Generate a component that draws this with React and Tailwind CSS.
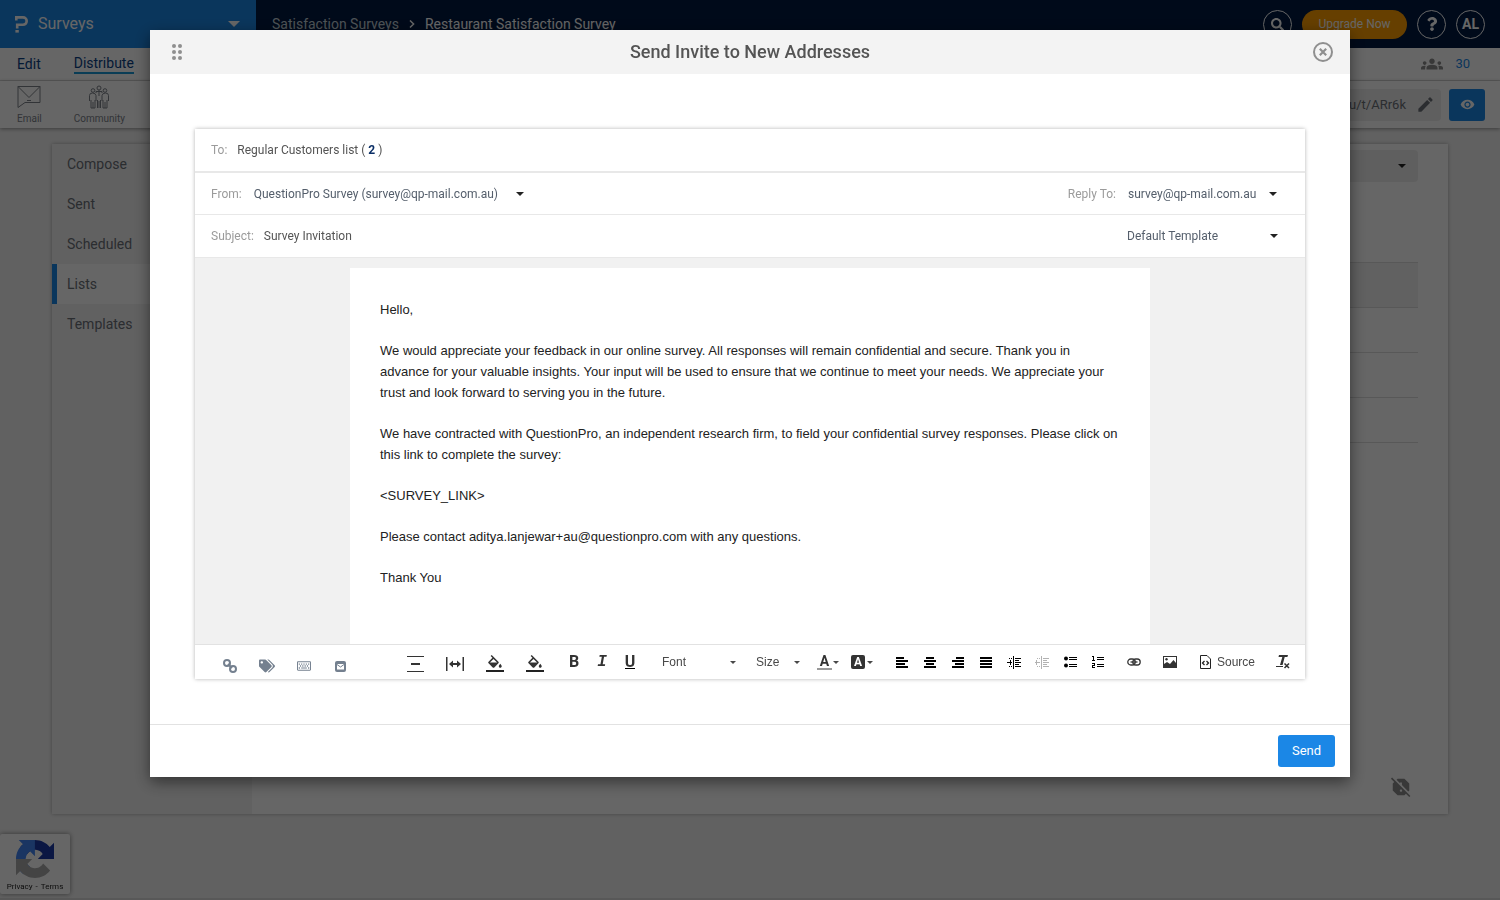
import React from 'react';
import { FaSearch, FaQuestion, FaTags, FaRegKeyboard } from 'react-icons/fa';
import { MdGroups, MdEdit, MdRemoveRedEye, MdReportOff, MdFormatColorFill } from 'react-icons/md';

const sideItems = ['Compose', 'Sent', 'Scheduled', 'Lists', 'Templates'];

export default function App() {
  return (
    <div className="min-h-screen flex flex-col bg-[#f3f3f3] border-b-2 border-[#dcdcdc] font-['Roboto',sans-serif]">
      <TopBar />
      <NavBar />
      <ToolRow />

      <main className="flex-1 flex px-[52px] pt-4 pb-[84px]">
        <div className="flex-1 flex bg-white shadow-[0_0_4px_rgba(0,0,0,0.3)]">
          <aside className="w-[200px] bg-[#f3f3f3]">
            {sideItems.map((item) => (
              <a
                key={item}
                href="#"
                className={`flex items-center h-10 text-sm text-[#6b7078] border-l-5 pl-[10px] ${
                  item === 'Lists' ? 'border-[#1b87e6] bg-white' : 'border-transparent'
                }`}
              >
                {item}
              </a>
            ))}
          </aside>

          <section className="flex-1 flex flex-col px-[30px] pt-[6px]">
            <div className="self-end relative w-[200px]">
              <select aria-label="List" className="appearance-none w-full h-8 rounded bg-[#eee]" />
              <Caret className="absolute right-3 top-[14px]" />
            </div>
            <table className="w-full mt-20">
              <thead>
                <tr className="h-[45px] bg-[#f3f3f3] border-y border-[#ddd]"><th></th></tr>
              </thead>
              <tbody>
                <tr className="h-[45px] border-b border-[#ddd]"><td></td></tr>
                <tr className="h-[45px] border-b border-[#ddd]"><td></td></tr>
                <tr className="h-[45px] border-b border-[#ddd]"><td></td></tr>
              </tbody>
            </table>
            <button aria-label="Report off" className="self-end mt-auto mb-4 mr-[6px] text-[#8c8c8c]">
              <MdReportOff size={22} />
            </button>
          </section>
        </div>
      </main>

      <Recaptcha />

      {/* dimmed backdrop + modal */}
      <div className="fixed inset-0 z-10 flex items-start justify-center bg-black/60 pt-[30px]">
        <InviteModal />
      </div>
    </div>
  );
}

function TopBar() {
  return (
    <header className="h-12 flex bg-[#001941] text-white">
      <button className="w-64 flex items-center bg-[#1b87e6] pl-[15px] pr-4 text-base">
        <svg width="13" height="17" viewBox="0 0 13 17" fill="none" stroke="currentColor" strokeWidth="2.6">
          <path d="M1.3 4.5V1.4H8a3.6 3.6 0 0 1 0 7.400H2.200V12.500" />
          <path d="M0.400 15.300h3.400" />
        </svg>
        <span className="ml-[10px]">Surveys</span>
        <svg width="12" height="6" viewBox="0 0 12 6" fill="currentColor" className="ml-auto">
          <path d="M0 0h12L6 6z" />
        </svg>
      </button>

      <nav className="flex items-center gap-[10px] pl-4 text-sm">
        <a href="#" className="text-[#c2d0d8]">Satisfaction Surveys</a>
        <svg width="6" height="8" viewBox="0 0 6 8" fill="none" stroke="currentColor" strokeWidth="1.5">
          <path d="M1 0.5L4.6 4 1 7.5" />
        </svg>
        <a href="#" className="text-white">Restaurant Satisfaction Survey</a>
      </nav>

      <div className="ml-auto flex items-center gap-[10px] pr-[15px]">
        <button aria-label="Search" className="size-[29px] rounded-full border border-white flex items-center justify-center">
          <FaSearch size={13} />
        </button>
        <button className="h-[29px] w-[105px] rounded-full bg-[#ff9e00] text-xs">Upgrade Now</button>
        <button aria-label="Help" className="size-[29px] rounded-full border border-white flex items-center justify-center">
          <FaQuestion size={14} />
        </button>
        <button className="size-[29px] rounded-full border border-white text-sm font-bold">AL</button>
      </div>
    </header>
  );
}

function NavBar() {
  return (
    <div className="h-[33px] flex items-center justify-between bg-white border-b border-[#ddd] pl-[17px] pr-[30px] text-sm">
      <nav className="flex gap-[33px] text-[#0b3f86]">
        <a href="#" className="leading-5">Edit</a>
        <a href="#" className="leading-[18px] border-b-2 border-[#1b9ad6]">Distribute</a>
      </nav>
      <div className="flex items-center gap-3 text-[13px] text-[#1b87e6]">
        <MdGroups size={22} className="text-[#8c8c8c]" />
        30
      </div>
    </div>
  );
}

function ToolRow() {
  return (
    <div className="h-[47px] flex items-center justify-between bg-white pl-[17px] pr-[15px] shadow-[0_1px_4px_rgba(0,0,0,0.4)]">
      <div className="flex gap-8 text-[10px] leading-3 text-[#7d828a]">
        <a href="#" className="flex flex-col items-center gap-1">
          <svg width="24" height="24" viewBox="0 0 24 24" fill="none" stroke="currentColor">
            <path d="M1 1.5h22v16H8l-7 5z M1 1.5l11 11 11-11 M10 15.5h4" />
          </svg>
          Email
        </a>
        <a href="#" className="flex flex-col items-center gap-1">
          <svg width="22" height="24" viewBox="0 0 22 24" fill="none" stroke="currentColor">
            <circle cx="11" cy="3" r="2" />
            <circle cx="5" cy="5.5" r="1.8" />
            <circle cx="17" cy="5.5" r="1.8" />
            <path d="M8 8V6.5h6V8M11 5v6" />
            <path d="M1.5 16v-5.5q0-2.5 3-2.5t3.5 2.5V16M14 16v-5.5q.5-2.5 3.500-2.500t3 2.500V16" />
            <path d="M3 15v8h4v-8M5 17v6M9.500 15v8M12.500 15v8M11 16v7M15 15v8h4v-8M17 17v6" />
          </svg>
          Community
        </a>
      </div>
      <div className="flex items-center gap-2">
        <div className="h-8 flex items-center gap-[10px] rounded bg-[#eee] pl-3 pr-[6px] text-[13px] text-[#6b7078]">
          au/t/ARr6k
          <button aria-label="Edit link"><MdEdit size={19} /></button>
        </div>
        <button aria-label="Preview" className="w-9 h-8 flex items-center justify-center rounded-[3px] bg-[#1b87e6] text-white">
          <MdRemoveRedEye size={15} />
        </button>
      </div>
    </div>
  );
}

function InviteModal() {
  return (
    <div role="dialog" aria-labelledby="invite-title" className="w-4/5 bg-white shadow-[0_5px_15px_rgba(0,0,0,0.5)]">
      <div className="h-11 flex items-center bg-[#f3f3f3] pl-[21px] pr-[17px] text-[#8f8f8f]">
        <svg width="12" height="16" viewBox="0 0 12 16" fill="currentColor">
          {[2, 8, 14].map((y) => (
            <g key={y}>
              <circle cx="3" cy={y} r="2" />
              <circle cx="9" cy={y} r="2" />
            </g>
          ))}
        </svg>
        <h2 id="invite-title" className="flex-1 pl-1 text-center text-lg font-medium text-[#545454]">
          Send Invite to New Addresses
        </h2>
        <button aria-label="Close">
          <svg width="20" height="20" viewBox="0 0 20 20" fill="none" stroke="currentColor">
            <circle cx="10" cy="10" r="9" strokeWidth="2" />
            <path d="M6.800 6.800l6.400 6.400M13.200 6.800l-6.400 6.400" strokeWidth="2.200" />
          </svg>
        </button>
      </div>

      <div className="px-[45px] pt-[55px] pb-[45px]">
        <div className="shadow-[0_0_4px_rgba(0,0,0,0.3)] text-xs text-[#545e6b]">
          <div className="h-11 flex items-center gap-[10px] px-4 border-b-2 border-[#e8e8e8]">
            <span className="text-[#9b9b9b]">To:</span>
            <span className="text-[#545454]">
              Regular Customers list ( <b className="font-bold text-[#0b2f66]">2</b> )
            </span>
          </div>

          <div className="h-[42px] flex items-center px-4 border-b border-[#e8e8e8]">
            <label htmlFor="from" className="text-[#9b9b9b] mr-3">From:</label>
            <Select id="from" value="QuestionPro Survey (survey@qp-mail.com.au)" className="w-[270px]" />
            <label htmlFor="reply" className="text-[#9b9b9b] ml-auto mr-3">Reply To:</label>
            <Select id="reply" value="survey@qp-mail.com.au" className="w-[149px] mr-3" />
          </div>

          <div className="h-[43px] flex items-center px-4 border-b border-[#e8e8e8]">
            <label htmlFor="subject" className="text-[#9b9b9b] mr-[10px]">Subject:</label>
            <input id="subject" defaultValue="Survey Invitation" className="flex-1 text-[#545454] outline-none" />
            <Select label="Template" value="Default Template" className="w-[151px] mr-[11px]" />
          </div>

          <div className="h-[386px] bg-[#f1f1f1] pt-[10px] flex justify-center">
            <div className="w-[800px] bg-white px-[30px] pt-[31px] flex flex-col gap-5 font-['Liberation_Sans',Arial,sans-serif] text-[13px] leading-[21px] text-[#222]">
              <p>Hello,</p>
              <p>
                We would appreciate your feedback in our online survey. All responses will remain confidential and
                secure. Thank you in advance for your valuable insights. Your input will be used to ensure that we
                continue to meet your needs. We appreciate your trust and look forward to serving you in the future.
              </p>
              <p>
                We have contracted with QuestionPro, an independent research firm, to field your confidential survey
                responses. Please click on this link to complete the survey:
              </p>
              <p>&lt;SURVEY_LINK&gt;</p>
              <p>Please contact aditya.lanjewar+au@questionpro.com with any questions.</p>
              <p>Thank You</p>
            </div>
          </div>

          <EditorToolbar />
        </div>
      </div>

      <div className="flex justify-end border-t border-[#e2e2e2] px-[15px] py-[10px]">
        <button className="h-8 w-[57px] rounded-[3px] bg-[#1b87e6] text-[13px] text-white">Send</button>
      </div>
    </div>
  );
}

function EditorToolbar() {
  return (
    <div className="h-[35px] flex items-center border-t border-[#e2e2e2] pl-4 pr-2 text-[#333]">
      <div className="flex pt-2 text-[#74808f]">
        <Tool label="Insert link" className="w-[37px]">
          <svg width="14" height="14" viewBox="0 0 14 14" fill="none" stroke="currentColor" strokeWidth="2">
            <circle cx="4" cy="4" r="3" />
            <circle cx="10" cy="10" r="3" />
            <path d="M5 5l4 4" />
          </svg>
        </Tool>
        <Tool label="Tags" className="w-[37px]"><FaTags size={16} /></Tool>
        <Tool label="Keyboard" className="w-[37px]"><FaRegKeyboard size={14} /></Tool>
        <Tool label="Mail" className="w-[37px]">
          <svg width="11" height="11" viewBox="0 0 11 11">
            <rect width="11" height="11" rx="2" fill="currentColor" />
            <path d="M2 3h7v5.500H2z" fill="#fff" />
            <path d="M2 3.500l3.500 2.500 3.500-2.500" fill="none" stroke="currentColor" />
          </svg>
        </Tool>
      </div>

      <div className="flex ml-9 pt-[3px]">
        <Tool label="Line height" className="w-10">
          <svg width="17" height="16" viewBox="0 0 17 16" fill="currentColor">
            <path d="M0 0h17v1H0zM4 7h9v2H4zM0 15h17v1H0z" />
          </svg>
        </Tool>
        <Tool label="Width" className="w-10">
          <svg width="18" height="14" viewBox="0 0 18 14" fill="currentColor">
            <path d="M0 0h1.500v14H0zM16.500 0H18v14h-1.500zM3 7l4-3.500V6h4V3.500L15 7l-4 3.500V8H7v2.500z" />
          </svg>
        </Tool>
        <Tool label="Background" className="w-10"><FillIcon /></Tool>
        <Tool label="Fill" className="w-10"><FillIcon /></Tool>
      </div>

      <div className="flex ml-[5px] text-base leading-5">
        <Tool label="Bold" className="w-7"><b>B</b></Tool>
        <Tool label="Italic" className="w-7"><b className="font-['Liberation_Mono',monospace] italic">I</b></Tool>
        <Tool label="Underline" className="w-7">
          <span className="border-b border-black font-bold leading-[13px]">U</span>
        </Tool>
      </div>

      <Select label="Font" value="Font" small className="w-[74px] ml-[18px] font-['Liberation_Sans',Arial,sans-serif] text-xs text-[#484848]" />
      <Select label="Size" value="Size" small className="w-[44px] ml-5 font-['Liberation_Sans',Arial,sans-serif] text-xs text-[#484848]" />

      <div className="flex ml-[11px]">
        <Tool label="Text color" className="w-[34px] gap-[1px]">
          <span className="w-[15px] border-b-2 border-[#999] text-sm leading-[14px] font-bold">A</span>
          <SmallCaret />
        </Tool>
        <Tool label="Highlight color" className="w-[34px] gap-[2px]">
          <span className="w-[14px] rounded-[2px] bg-[#333] text-white text-xs leading-[14px] font-bold">A</span>
          <SmallCaret />
        </Tool>
      </div>

      <div className="flex ml-[9px] text-black">
        <Tool label="Align left" className="w-7"><Lines d="M0 1h8v2H0zM0 4h12v2H0zM0 7h9v2H0zM0 10h12v2H0z" /></Tool>
        <Tool label="Center" className="w-7"><Lines d="M2 1h8v2H2zM0 4h12v2H0zM2 7h8v2H2zM0 10h12v2H0z" /></Tool>
        <Tool label="Align right" className="w-7"><Lines d="M4 1h8v2H4zM0 4h12v2H0zM3 7h9v2H3zM0 10h12v2H0z" /></Tool>
        <Tool label="Justify" className="w-7"><Lines d="M0 1h12v2H0zM0 4h12v2H0zM0 7h12v2H0zM0 10h12v2H0z" /></Tool>
        <Tool label="Increase indent" className="w-7"><IndentIcon arrow="M0 6h5v1H0zM3 4h1v5H3z" /></Tool>
        <Tool label="Decrease indent" className="w-7 opacity-30"><IndentIcon arrow="M0 6h5v1H0zM1 4h1v5H1z" /></Tool>
        <Tool label="Bulleted list" className="w-7">
          <svg width="13" height="12" viewBox="0 0 13 12" fill="currentColor">
            <circle cx="2" cy="2.500" r="2" />
            <circle cx="2" cy="9.500" r="2" />
            <path d="M5 1h8v1H5zM5 3h8v1H5zM5 8h8v1H5zM5 10h8v1H5z" />
          </svg>
        </Tool>
        <Tool label="Numbered list" className="w-7">
          <svg width="12" height="13" viewBox="0 0 12 13" fill="currentColor">
            <path d="M1 0h1v4h1v1H0V4h1V1H0V0zM0 7h3v3H1v1h2v1H0V9h2V8H0zM5 1h7v1H5zM5 3h7v1H5zM5 8h7v1H5zM5 10h7v1H5z" />
          </svg>
        </Tool>
      </div>

      <Tool label="Link" className="w-7 ml-2">
        <svg width="14" height="8" viewBox="0 0 14 8" fill="none" stroke="currentColor" strokeWidth="1.300">
          <rect x="0.800" y="1" width="7.400" height="6" rx="3" />
          <rect x="5.800" y="1" width="7.400" height="6" rx="3" />
          <path d="M3.500 4h7" />
        </svg>
      </Tool>
      <Tool label="Image" className="w-7 ml-2">
        <svg width="14" height="12" viewBox="0 0 14 12" fill="currentColor">
          <path d="M0 0h14v12H0zM1 1v10h12V1z" fillRule="evenodd" />
          <path d="M1 11V8l3-2 3 2 3.500-4L13 7v4z" />
          <circle cx="3.500" cy="3.300" r="1.200" />
        </svg>
      </Tool>
      <button className="flex items-center gap-[6px] ml-4 font-['Liberation_Sans',Arial,sans-serif] text-xs text-[#484848]">
        <svg width="11" height="14" viewBox="0 0 11 14" fill="none" stroke="#222">
          <path d="M0.500 0.500h6.500l3.500 3.500v9.500h-10z" />
          <path d="M4.500 6L2.500 8l2 2M6.500 6l2 2-2 2" strokeWidth="1.300" />
        </svg>
        Source
      </button>
      <Tool label="Remove format" className="w-7 ml-[14px]">
        <svg width="14" height="14" viewBox="0 0 14 14" fill="currentColor">
          <path d="M3 0h9l-.6 2H8.700L6.600 10H4L6.300 2H2.500zM0 11h7v1H0z" />
          <path d="M8.500 8.500l4.500 4.500M13 8.500l-4.500 4.500" stroke="currentColor" strokeWidth="1.500" />
        </svg>
      </Tool>
    </div>
  );
}

const Tool = ({ label, className, children }) => (
  <button aria-label={label} className={`flex items-center justify-center ${className}`}>
    {children}
  </button>
);

const FillIcon = () => (
  <span className="flex flex-col items-center border-b-2 border-[#222]">
    <MdFormatColorFill size={18} viewBox="0 0 24 20" className="h-[15px]" />
  </span>
);

const Lines = ({ d }) => (
  <svg width="12" height="12" viewBox="0 0 12 12" fill="currentColor" shapeRendering="crispEdges">
    <path d={d} />
  </svg>
);

const IndentIcon = ({ arrow }) => (
  <svg width="14" height="13" viewBox="0 0 14 13" fill="currentColor" shapeRendering="crispEdges">
    <path d="M6 0h1v13H6zM8 2h6v1H8zM8 4h4v1H8zM8 6h6v1H8zM8 8h4v1H8zM8 10h6v1H8zM2 2h1v1H2zM4 2h1v1H4zM2 10h1v1H2zM4 10h1v1H4z" />
    <path d={arrow} />
  </svg>
);

const Caret = ({ className }) => (
  <svg width="8" height="4" viewBox="0 0 8 4" fill="#222" className={className}>
    <path d="M0 0h8L4 4z" />
  </svg>
);

const SmallCaret = ({ className }) => (
  <svg width="6" height="3" viewBox="0 0 6 3" fill="#484848" className={className}>
    <path d="M0 0h6L3 3z" />
  </svg>
);

const Select = ({ id, label, value, small, className }) => (
  <span className={`relative flex items-center ${className}`}>
    <select id={id} aria-label={label} className="appearance-none w-full outline-none">
      <option>{value}</option>
    </select>
    {small ? (
      <SmallCaret className="absolute right-0 pointer-events-none" />
    ) : (
      <Caret className="absolute right-0 pointer-events-none" />
    )}
  </span>
);

function Recaptcha() {
  return (
    <div className="fixed left-0 bottom-[6px] w-[70px] h-[60px] flex flex-col items-center gap-1 pt-[6px] rounded-[2px] bg-white shadow-[0_0_5px_gray]">
      <svg width="38" height="38" viewBox="0 0 64 64">
        <path
          fill="#1c3aa9"
          d="M64 31.955l-.033-1.370V4.687l-7.160 7.160C50.948 4.674 42.033.093 32.050.093c-10.400 0-19.622 4.960-25.458 12.640l11.736 11.860a15.550 15.550 0 0 1 4.754-5.334c2.050-1.600 4.952-2.906 8.968-2.906.485 0 .860.057 1.135.163 4.976.393 9.288 3.140 11.828 7.124l-8.307 8.307L64 31.953"
        />
        <path
          fill="#4285f4"
          d="M31.862.094l-1.370.033H4.594l7.160 7.160C4.580 13.147 0 22.060 0 32.046c0 10.400 4.960 19.622 12.640 25.458L24.500 45.768a15.550 15.550 0 0 1-5.334-4.754c-1.600-2.050-2.906-4.952-2.906-8.968 0-.485.057-.860.163-1.135.393-4.976 3.140-9.288 7.124-11.828l8.307 8.307L31.860.095"
        />
        <path
          fill="#ababab"
          d="M.001 32.045l.033 1.370v25.898l7.160-7.160c5.860 7.173 14.774 11.754 24.760 11.754 10.400 0 19.622-4.960 25.458-12.640l-11.736-11.860a15.550 15.550 0 0 1-4.754 5.334c-2.050 1.600-4.952 2.906-8.968 2.906-.485 0-.860-.057-1.135-.163-4.976-.393-9.288-3.140-11.828-7.124l8.307-8.307c-10.522.040-22.400.066-27.295-.005"
        />
      </svg>
      <div className="flex gap-[3px] text-[8px] leading-[10px] text-[#222]">
        <a href="#">Privacy</a>-<a href="#">Terms</a>
      </div>
    </div>
  );
}
